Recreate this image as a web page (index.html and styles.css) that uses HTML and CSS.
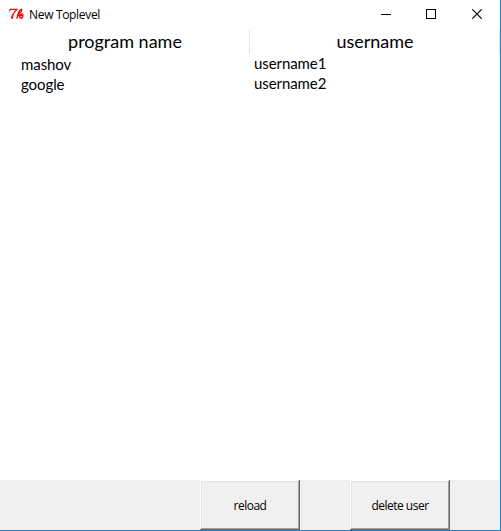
FILE: index.html
```html
<!DOCTYPE html>
<html lang="en">
<head>
<meta charset="utf-8">
<title>New Toplevel</title>
<link rel="stylesheet" href="styles.css">
</head>
<body>
<div class="window">
  <header class="titlebar">
    <svg class="logo" width="16" height="12" viewBox="0 0 16 12" fill="none" stroke="#f00" stroke-width="1.3">
      <path d="M0.3 3.2L1.3 1.4H7.7L5.8 3.6L4 6.5L3.2 10.8M3.8 6.5L2.4 10.5"/>
      <path d="M12.9 1L11 2.2L9 6L7.8 10.8M12.9 1L12.3 3.5L9.3 6.6M9.3 8L13.6 5.3M10.8 6.8V9.6L12.5 10.4L13.8 8.8V7.2L11 7.9"/>
    </svg>
    <h1 class="title">New Toplevel</h1>
    <div class="controls">
      <svg width="10" height="10"><path d="M0 5.5H10" stroke="#000"/></svg>
      <svg width="10" height="10"><rect x=".5" y=".5" width="9" height="9" fill="none" stroke="#000"/></svg>
      <svg class="close" width="10" height="10"><path d="M.3 .3L9.7 9.7M9.7 .3L.3 9.7" stroke="#000" stroke-width="1.1"/></svg>
    </div>
  </header>
  <main class="lists">
    <section class="column">
      <h2 class="heading">program name</h2>
      <ul class="items programs"><li>mashov</li><li>google</li></ul>
    </section>
    <section class="column">
      <h2 class="heading">username</h2>
      <ul class="items users"><li>username1</li><li>username2</li></ul>
    </section>
  </main>
  <footer class="actions">
    <button class="button">reload</button>
    <button class="button">delete user</button>
  </footer>
</div>
</body>
</html>
```
FILE: styles.css
```css
* { box-sizing: border-box; }
body { margin: 0; }
.window {
  width: 501px;
  height: 531px;
  display: flex;
  flex-direction: column;
  background: #fff;
  color: #000;
  border-right: 1px solid #1883d7;
  border-bottom: 1px solid #1883d7;
  font-family: "Open Sans", "Noto Sans", sans-serif;
}
.titlebar { height: 30px; display: flex; align-items: center; padding: 0 18px 2px 9px; }
.logo { margin-right: 4px; }
.title { margin: 1px 0 0; font-size: 12px; font-weight: 400; letter-spacing: -.32px; }
.controls { margin-left: auto; display: flex; gap: 35px; }
.close { margin-left: 1px; }
.lists { flex: 1; display: grid; grid-template-columns: 250px 250px; }
.heading {
  height: 24px;
  margin: 0;
  padding-left: 1px;
  text-align: center;
  font: 400 18px/22px Lato, sans-serif;
  border-right: 1px solid #e5e5e5;
}
.items { margin: 0; padding: 0; list-style: none; font: 15px/20px Lato, sans-serif; letter-spacing: -.08px; }
.programs { padding-left: 21px; }
.users { margin-top: -1px; padding-left: 4px; }
.actions { height: 50px; display: flex; gap: 50px; padding-left: 200px; background: #f0f0f0; }
.button {
  width: 100px;
  height: 50px;
  padding: 0;
  border: 0;
  background: #f0f0f0;
  box-shadow: inset -1px -1px #696969, inset 1px 1px #fff, inset -2px -2px #a0a0a0, inset 2px 2px #e3e3e3;
  color: #000;
  font: 12px "Open Sans", "Noto Sans", sans-serif;
  letter-spacing: -.5px;
}
```
